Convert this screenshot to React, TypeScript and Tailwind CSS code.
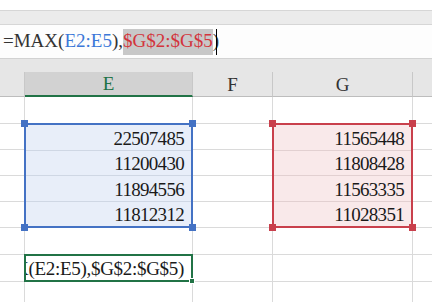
import React from "react";

const serif = "font-['Liberation_Serif','Noto_Sans_CJK_TC',serif]";

const eValues = ["22507485", "11200430", "11894556", "11812312"];
const gValues = ["11565448", "11808428", "11563335", "11028351"];

// handles on the corners of a referenced range
const Handles: React.FC<{ color: string }> = ({ color }) => (
  <>
    <span className={`absolute -left-[5px] -top-[5px] w-[7px] h-[7px] ${color}`} />
    <span className={`absolute -right-[5px] -top-[5px] w-[7px] h-[7px] ${color}`} />
    <span className={`absolute -left-[5px] -bottom-[5px] w-[7px] h-[7px] ${color}`} />
    <span className={`absolute -right-[5px] -bottom-[5px] w-[7px] h-[7px] ${color}`} />
  </>
);

const RangeBox: React.FC<{
  values: string[];
  box: string;
  line: string;
  handle: string;
}> = ({ values, box, line, handle }) => (
  <div className={`relative -ml-px -mt-px flex flex-col border-2 ${box}`}>
    {values.map((v, i) => (
      <div
        key={v}
        className={`flex-1 flex items-center justify-end pr-[7px] pt-[2px] text-[19px] leading-none tracking-[-0.7px] text-[#1a1a1a] ${serif} ${
          i < values.length - 1 ? `border-b ${line}` : ""
        }`}
      >
        {v}
      </div>
    ))}
    <Handles color={handle} />
  </div>
);

const App: React.FC = () => {
  // 8 rows x 5 columns; explicit items take their slots, plain cells fill the rest
  const plainCells: React.ReactNode[] = [];
  for (let r = 0; r < 8; r++) {
    for (let c = 0; c < 5; c++) {
      if ((c === 1 || c === 3) && r >= 1 && r <= 4) continue;
      if (c === 1 && r === 6) continue;
      const right = c < 4 ? "border-r" : "";
      const bottom = r < 7 ? "border-b" : "";
      plainCells.push(
        <div key={`${r}-${c}`} className={`${right} ${bottom} border-[#dadada]`} />
      );
    }
  }

  return (
    <div className="w-[448px] h-[305px] bg-white overflow-hidden">
      <div className="w-[432px] pt-[10px]">
        {/* ribbon edge */}
        <div className="h-[15px] bg-[#ebebeb] border-y border-[#d6d6d6]" />

        {/* formula bar */}
        <div
          className={`h-[34px] bg-[#fdfdfd] border-b border-[#d2d2d2] flex items-center pl-[3px] text-[19px] text-[#333] ${serif}`}
        >
          <span>=MAX(</span>
          <span className="text-[#3c78d8]">E2:E5</span>
          <span>),</span>
          <span className="inline-flex items-center h-[26px] bg-[#c8c8c8] text-[#d3343c]">
            $G$2:$G$5
          </span>
          <span>)</span>
          <span className="inline-block w-px h-[26px] bg-black -ml-[3px]" />
        </div>

        <div className="h-[13px] bg-[#e6e6e6]" />

        {/* column headers */}
        <div
          className={`h-[25px] grid grid-cols-[25px_168px_80px_140px_19px] bg-[#e6e6e6] text-[19px] leading-none text-[#333] ${serif}`}
        >
          <div className="border-r border-b border-r-[#c8c8c8] border-b-[#bdbdbd]" />
          <div className="flex items-center justify-center bg-[#d2d2d2] border-r border-r-[#c8c8c8] border-b-2 border-b-[#217346] text-[#217346]">
            E
          </div>
          <div className="flex items-center justify-center border-r border-b border-r-[#c8c8c8] border-b-[#bdbdbd]">
            F
          </div>
          <div className="flex items-center justify-center border-r border-b border-r-[#c8c8c8] border-b-[#bdbdbd]">
            G
          </div>
          <div className="border-b border-b-[#bdbdbd]" />
        </div>

        {/* sheet */}
        <div className="grid grid-cols-[25px_168px_80px_140px_19px] grid-rows-[27px_26px_26px_26px_26px_27px_27px_20px] bg-white">
          <div className="col-start-2 row-start-2 row-span-4 flex">
            <RangeBox
              values={eValues}
              box="flex-1 border-[#4472c4] bg-[#e8eef9]"
              line="border-[#cfd7e4]"
              handle="bg-[#4472c4]"
            />
          </div>
          <div className="col-start-4 row-start-2 row-span-4 flex">
            <RangeBox
              values={gValues}
              box="flex-1 border-[#c9404c] bg-[#f9e9ea]"
              line="border-[#e2d0d1]"
              handle="bg-[#c9404c]"
            />
          </div>

          {/* cell being edited */}
          <div className="col-start-2 row-start-7 flex">
            <div className="relative flex-1 -ml-px -mt-px border-2 border-[#217346] bg-white">
              <div className="absolute inset-0 overflow-hidden flex items-center justify-end pr-[7px]">
                <span
                  className={`whitespace-nowrap text-[19px] leading-none tracking-[-0.3px] text-[#1a1a1a] ${serif}`}
                >
                  =MAX(E2:E5),$G$2:$G$5)
                </span>
              </div>
              <span className="absolute -right-[4px] -bottom-[4px] w-[6px] h-[6px] bg-[#217346] border border-white" />
            </div>
          </div>

          {plainCells}
        </div>
      </div>
    </div>
  );
};

export default App;
